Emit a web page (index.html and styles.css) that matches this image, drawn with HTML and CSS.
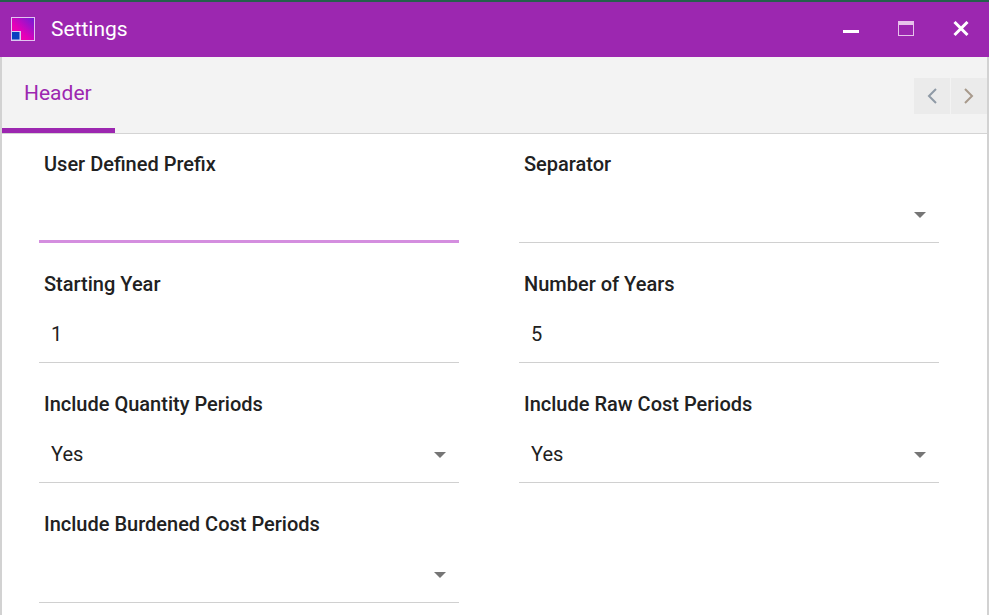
FILE: index.html
```html
<!DOCTYPE html>
<html lang="en">
<head>
<meta charset="utf-8">
<title>Settings</title>
<link rel="stylesheet" href="styles.css">
</head>
<body>
<div class="strip"></div>
<div class="window">
  <header class="titlebar">
    <svg class="logo" width="24" height="24" viewBox="0 0 24 24" aria-hidden="true">
      <defs>
        <linearGradient id="lg" x1="1" y1="0" x2="0" y2="1">
          <stop offset="0" stop-color="#6a1fd8"/>
          <stop offset="0.6" stop-color="#e400b8"/>
          <stop offset="1" stop-color="#ff00a8"/>
        </linearGradient>
      </defs>
      <rect x="0.5" y="0.5" width="23" height="23" fill="url(#lg)" stroke="#e3c4f0"/>
      <rect x="0" y="14" width="10" height="10" fill="#d9ccf0"/>
      <rect x="1" y="15" width="7.5" height="7.5" fill="#0a3fc0"/>
    </svg>
    <span class="title">Settings</span>
    <div class="controls">
      <button class="ctl" aria-label="Minimize">
        <svg width="16" height="16" viewBox="0 0 16 16"><rect x="0" y="9" width="16" height="3" fill="#fff"/></svg>
      </button>
      <button class="ctl" aria-label="Maximize">
        <svg width="16" height="16" viewBox="0 0 16 16"><rect x="0.5" y="0.5" width="15" height="14" fill="none" stroke="#e6c3ea"/><rect x="0" y="0" width="16" height="4" fill="#e6c3ea"/></svg>
      </button>
      <button class="ctl" aria-label="Close">
        <svg width="16" height="16" viewBox="0 0 16 16"><path d="M1.5 1 L14.5 14 M14.5 1 L1.5 14" stroke="#fff" stroke-width="3" fill="none"/></svg>
      </button>
    </div>
  </header>
  <nav class="tabbar">
    <div class="tab">Header</div>
    <div class="tabnav">
      <button class="navbtn" aria-label="Previous">
        <svg width="12" height="16" viewBox="0 0 12 16"><path d="M10 1 L3 8 L10 15" fill="none" stroke="#8f9aa6" stroke-width="2"/></svg>
      </button>
      <button class="navbtn" aria-label="Next">
        <svg width="12" height="16" viewBox="0 0 12 16"><path d="M2 1 L9 8 L2 15" fill="none" stroke="#a89a8c" stroke-width="2"/></svg>
      </button>
    </div>
  </nav>
  <main class="form">
    <div class="field">
      <label class="label">User Defined Prefix</label>
      <div class="control focused"></div>
    </div>
    <div class="field">
      <label class="label">Separator</label>
      <div class="control"><span class="value"></span><span class="caret"></span></div>
    </div>
    <div class="field">
      <label class="label">Starting Year</label>
      <div class="control"><span class="value">1</span></div>
    </div>
    <div class="field">
      <label class="label">Number of Years</label>
      <div class="control"><span class="value">5</span></div>
    </div>
    <div class="field">
      <label class="label">Include Quantity Periods</label>
      <div class="control"><span class="value">Yes</span><span class="caret"></span></div>
    </div>
    <div class="field">
      <label class="label">Include Raw Cost Periods</label>
      <div class="control"><span class="value">Yes</span><span class="caret"></span></div>
    </div>
    <div class="field">
      <label class="label">Include Burdened Cost Periods</label>
      <div class="control"><span class="value"></span><span class="caret"></span></div>
    </div>
  </main>
</div>
</body>
</html>
```
FILE: styles.css
```css
* { box-sizing: border-box; }
html, body {
  margin: 0;
  height: 100%;
  overflow: hidden;
  background: #fff;
  font-family: Roboto, "Liberation Sans", sans-serif;
}
.strip { height: 2px; background: #24604c; }
.window {
  height: 613px;
  display: flex;
  flex-direction: column;
  border-left: 2px solid #d2d2d2;
  border-right: 2px solid #d2d2d2;
}
.titlebar {
  flex: none;
  height: 55px;
  margin: 0 -2px;
  padding: 0 0 1px 11px;
  background: #9c27b0;
  display: flex;
  align-items: center;
  color: #fff;
}
.logo { flex: none; }
.title { margin-left: 16px; font-size: 21px; line-height: 24px; }
.controls { margin-left: auto; display: flex; padding-right: 1px; }
.ctl {
  width: 55px;
  height: 54px;
  padding: 0;
  border: 0;
  background: none;
  display: flex;
  align-items: center;
  justify-content: center;
}
.tabbar {
  flex: none;
  height: 77px;
  background: #f3f3f3;
  border-bottom: 1px solid #d4d4d4;
  display: flex;
  justify-content: space-between;
}
.tab {
  width: 113px;
  height: 76px;
  padding: 24px 0 0 22px;
  font-size: 21px;
  line-height: 24px;
  color: #9c27b0;
  border-bottom: 5px solid #9c27b0;
}
.tabnav { display: flex; gap: 1px; padding-top: 21px; }
.navbtn {
  width: 36px;
  height: 36px;
  padding: 0;
  border: 0;
  background: #ebebeb;
  display: flex;
  align-items: center;
  justify-content: center;
}
.form {
  display: grid;
  grid-template-columns: 420px 420px;
  column-gap: 60px;
  grid-auto-rows: 120px;
  padding-left: 37px;
}
.field { display: flex; flex-direction: column; height: 120px; padding-top: 18px; }
.label {
  padding-left: 5px;
  height: 24px;
  font-size: 20px;
  font-weight: 500;
  line-height: 24px;
  color: #212121;
}
.control {
  margin-top: 16px;
  height: 51px;
  border-bottom: 1px solid #d0d0d0;
  padding: 0 13px 4px 12px;
  display: flex;
  align-items: center;
  justify-content: space-between;
  font-size: 20px;
  color: #212121;
}
.control.focused { border-bottom: 3px solid #d48edf; }
.value { line-height: 24px; margin-bottom: 2px; }
.caret {
  width: 0;
  height: 0;
  border-left: 6px solid transparent;
  border-right: 6px solid transparent;
  border-top: 6px solid #757575;
}
```
